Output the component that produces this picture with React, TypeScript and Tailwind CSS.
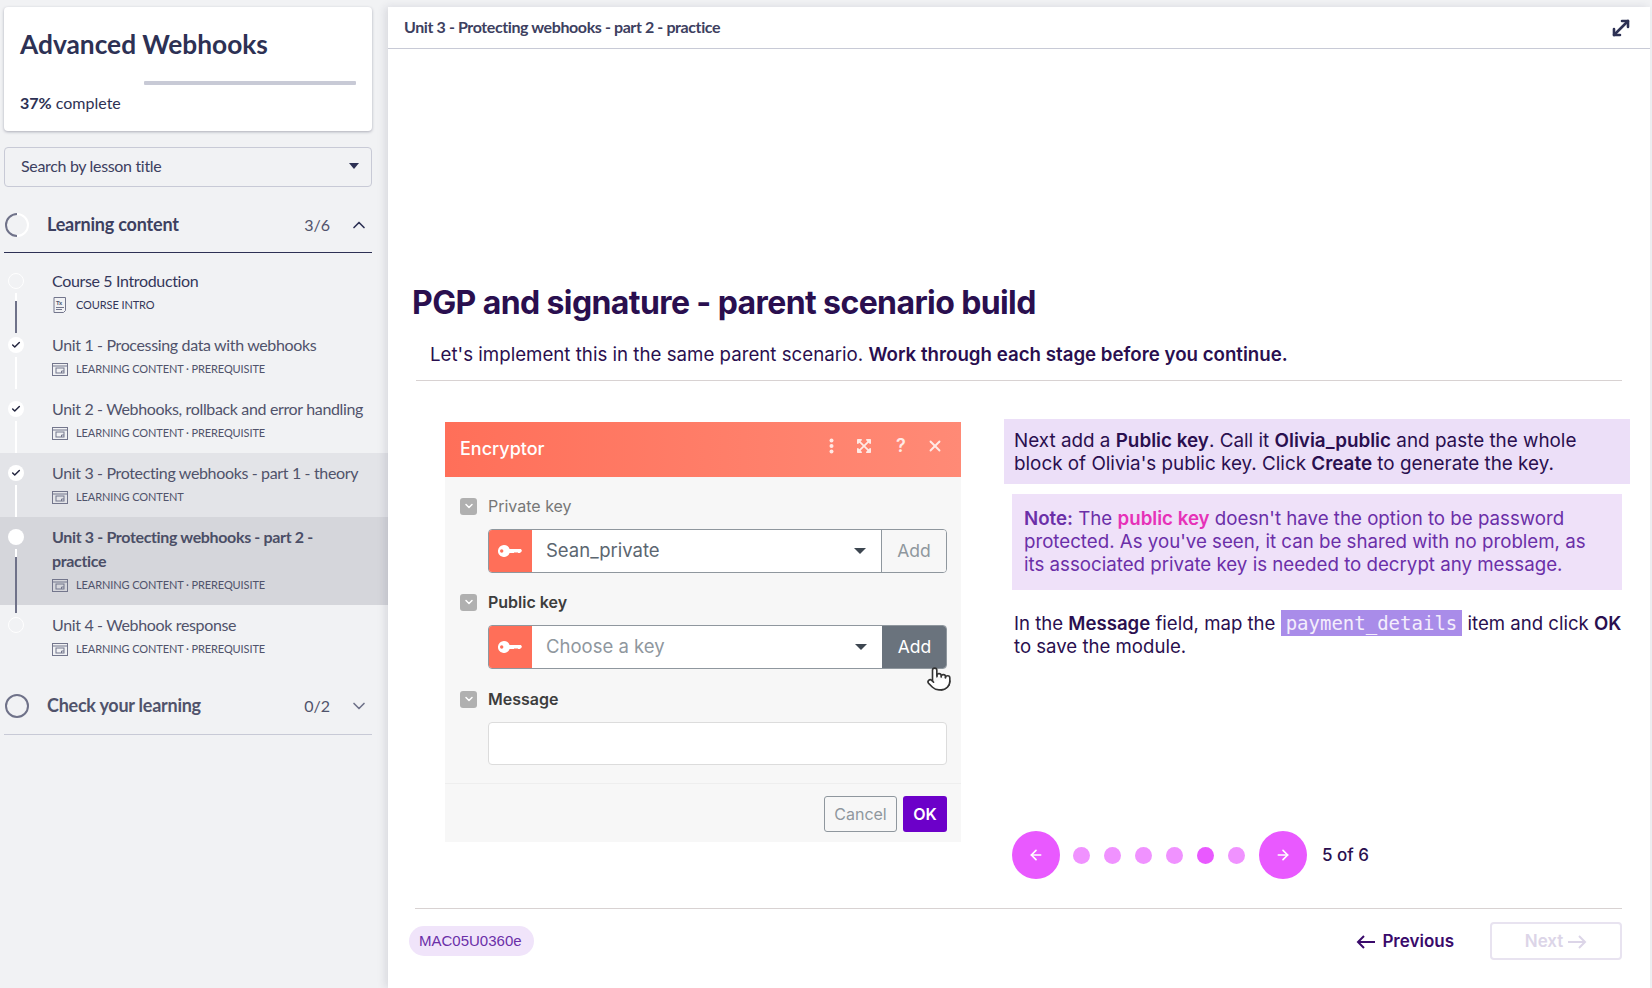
import { ChevronDown, ChevronUp, MoveDiagonal, Pointer, ArrowLeft, ArrowRight, Check, X } from 'lucide-react';
import { FaExpandArrowsAlt } from 'react-icons/fa';

const sideFont = 'font-["Lato","Noto_Sans",sans-serif]';
const mainFont = 'font-["Inter","Liberation_Sans",sans-serif]';

interface Lesson {
  title: string;
  meta: string;
  done?: boolean;
  bg?: string;
  bold?: boolean;
  intro?: boolean;
  dark?: string;
  dotFill?: boolean;
  last?: boolean;
}

const lessons: Lesson[] = [
  { title: 'Course 5 Introduction', meta: 'COURSE INTRO', intro: true, dark: 'h-[32px]' },
  { title: 'Unit 1 - Processing data with webhooks', meta: 'LEARNING CONTENT · PREREQUISITE', done: true },
  { title: 'Unit 2 - Webhooks, rollback and error handling', meta: 'LEARNING CONTENT · PREREQUISITE', done: true },
  { title: 'Unit 3 - Protecting webhooks - part 1 - theory', meta: 'LEARNING CONTENT', done: true, bg: 'bg-[#e3e4e8]' },
  {
    title: 'Unit 3 - Protecting webhooks - part 2 - practice',
    meta: 'LEARNING CONTENT · PREREQUISITE',
    bg: 'bg-[#d5d6db]',
    bold: true,
    dark: 'h-[56px]',
    dotFill: true,
  },
  { title: 'Unit 4 - Webhook response', meta: 'LEARNING CONTENT · PREREQUISITE', last: true },
];

function SlideIcon() {
  return (
    <svg width="16" height="13" viewBox="0 0 16 13" fill="none" stroke="#73768c" strokeWidth="1">
      <rect x="0.5" y="0.5" width="15" height="12" />
      <path d="M0.5 3h15" />
      <rect x="4" y="5" width="8" height="5" />
      <path d="M9.5 10V8H12" />
    </svg>
  );
}

function DocIcon() {
  return (
    <svg width="14" height="16" viewBox="0 0 14 16" fill="none" stroke="#73768c" strokeWidth="1">
      <path d="M1 .5h11.5v13l-2 2H1z" />
      <path d="M3 10.5h8M3 12.5h6" />
      <text x="3" y="8" fontSize="6" fill="#50536b" stroke="none" fontWeight="700">Tx</text>
    </svg>
  );
}

function LessonRow({ lesson }: { lesson: Lesson }) {
  return (
    <div className={`flex min-h-[64px] pl-2 pr-2 ${lesson.bg ?? ''}`}>
      <div className="flex w-4 shrink-0 flex-col items-center pt-3">
        <div
          className={`flex h-4 w-4 shrink-0 items-center justify-center rounded-full ${
            lesson.done || lesson.dotFill ? 'bg-white' : 'border border-white'
          }`}
        >
          {lesson.done && <Check className="h-2.5 w-2.5 text-[#23253f]" strokeWidth={3.5} />}
        </div>
        {!lesson.last && (
          <div className="mt-1 flex w-[2px] flex-1 flex-col justify-end bg-white">
            {lesson.dark && <div className={`w-[2px] bg-[#6f7289] ${lesson.dark} -mb-[8px]`} />}
          </div>
        )}
      </div>
      <div className="ml-7 flex-1 pt-2 pb-2">
        <div
          className={`text-[16px] leading-6 tracking-[-0.35px] ${
            lesson.bold ? 'max-w-[290px] font-bold text-[#4b4e66]' : lesson.intro ? 'text-[#34375a]' : 'text-[#50536b]'
          }`}
        >
          {lesson.title}
        </div>
        <div
          className={`flex h-6 items-center gap-2 text-[11px] tracking-[-0.1px] ${lesson.intro ? 'text-[#34375a]' : 'text-[#50536b]'}`}
        >
          <span className="flex w-4 justify-center">{lesson.intro ? <DocIcon /> : <SlideIcon />}</span>
          {lesson.meta}
        </div>
      </div>
    </div>
  );
}

function KeyIcon() {
  return (
    <svg width="24" height="12" viewBox="0 0 24 12" fill="#fff">
      <path
        fillRule="evenodd"
        d="M6 0a6 6 0 0 1 5.6 4H23l1 2-2 2h-2l-1-1-1 1-1-1-1 1h-4.400A6 6 0 1 1 6 0zM3.700 4.300a1.700 1.700 0 1 0 0 3.400 1.700 1.700 0 0 0 0-3.400z"
      />
    </svg>
  );
}

function LongArrow({ flip }: { flip?: boolean }) {
  return (
    <svg
      width="20"
      height="14"
      viewBox="0 0 20 14"
      fill="none"
      stroke="currentColor"
      strokeWidth="2"
      className={flip ? 'rotate-180' : ''}
    >
      <path d="M19 7H2M8 1 2 7l6 6" />
    </svg>
  );
}

function FieldLabel({ label, bold }: { label: string; bold?: boolean }) {
  return (
    <div className="flex h-6 items-center">
      <div className="flex h-[17px] w-[17px] items-center justify-center rounded-[3px] bg-[#b0b0b0]">
        <ChevronDown className="h-3 w-3 text-white" strokeWidth={3} />
      </div>
      <span className={`ml-[11px] text-[16px] ${bold ? 'font-semibold text-[#3d3d3d]' : 'text-[#777]'}`}>{label}</span>
    </div>
  );
}

function KeySelect({ value, muted, hover }: { value: string; muted?: boolean; hover?: boolean }) {
  return (
    <div className="ml-[28px] flex h-[44px] overflow-hidden rounded-[4px] border border-[#8f979e] bg-white">
      <div className="-my-px -ml-px flex w-[44px] items-center justify-center bg-[#ff6f59]">
        <KeyIcon />
      </div>
      <div className={`flex flex-1 items-center pl-[14px] text-[18.5px] ${muted ? 'text-[#8f979e]' : 'text-[#5b6670]'}`}>
        {value}
      </div>
      <div className="mr-[15px] flex items-center">
        <div className="h-0 w-0 border-x-[6px] border-t-[6px] border-x-transparent border-t-[#3d4650]" />
      </div>
      <div
        className={`flex w-[65px] items-center justify-center text-[17.5px] ${
          hover
            ? '-my-px -mr-px bg-[#6a737d] text-white'
            : 'border-l border-[#8f979e] bg-[#f7f7f7] text-[#8f979e]'
        }`}
      >
        Add
      </div>
    </div>
  );
}

function Encryptor() {
  return (
    <div className={`relative w-[516px] shrink-0 bg-[#f7f7f7] ${mainFont}`}>
      <div className="flex h-[55px] items-center bg-gradient-to-r from-[#ff6f59] to-[#ff8a76] pb-[3px] pl-[15px] pr-[17px] text-white">
        <span className="flex-1 text-[18px] font-medium">Encryptor</span>
        <div className="-mt-[4px] flex items-center text-[#ffe9e5]">
          <svg width="5" height="16" viewBox="0 0 5 16" fill="currentColor">
            <circle cx="2.500" cy="2.500" r="2" />
            <circle cx="2.500" cy="8" r="2" />
            <circle cx="2.500" cy="13.500" r="2" />
          </svg>
          <FaExpandArrowsAlt className="ml-[22px] h-4 w-4" />
          <span className="ml-[21px] w-4 text-center text-[18px] font-semibold leading-none">?</span>
          <X className="ml-[17px] h-[18px] w-[18px]" strokeWidth={2.5} />
        </div>
      </div>
      <div className="pl-[15px] pr-[14px] pt-[17px]">
        <FieldLabel label="Private key" />
        <div className="mt-[11px]">
          <KeySelect value="Sean_private" />
        </div>
        <div className="mt-[17px]">
          <FieldLabel label="Public key" bold />
        </div>
        <div className="mt-[11px]">
          <KeySelect value="Choose a key" muted hover />
        </div>
        <div className="mt-[18px]">
          <FieldLabel label="Message" bold />
        </div>
        <div className="ml-[28px] mt-[11px] h-[43px] rounded-[4px] border border-[#dcdcdc] bg-white" />
      </div>
      <div className="mt-[18px] flex h-[59px] items-start justify-end gap-[6px] border-t border-[#eeeeee] pr-[14px] pt-[12px]">
        <div className="flex h-[36px] w-[73px] items-center justify-center rounded-[3px] border border-[#8f979e] text-[16px] text-[#8f979e]">
          Cancel
        </div>
        <div className="flex h-[36px] w-[44px] items-center justify-center rounded-[3px] bg-[#6c00c9] text-[16px] font-semibold text-white">
          OK
        </div>
      </div>
      <Pointer className="absolute left-[481px] top-[243px] h-[28px] w-[26px] fill-white text-[#333]" strokeWidth={1.5} />
    </div>
  );
}

function Pager() {
  const dots = [false, false, false, false, true, false];
  return (
    <div className="ml-[8px] flex items-center">
      <div className="flex h-12 w-12 items-center justify-center rounded-full bg-[#e959ff]">
        <ArrowLeft className="h-4 w-4 text-white" strokeWidth={2.5} />
      </div>
      <div className="ml-[13px] flex gap-[14px]">
        {dots.map((active, i) => (
          <div key={i} className={`h-[17px] w-[17px] rounded-full ${active ? 'bg-[#e959ff]' : 'bg-[#f092ff]'}`} />
        ))}
      </div>
      <div className="ml-[14px] flex h-12 w-12 items-center justify-center rounded-full bg-[#e959ff]">
        <ArrowRight className="h-4 w-4 text-white" strokeWidth={2.5} />
      </div>
      <span className="ml-[15px] text-[17px] font-medium text-[#2a0f4f]">5 of 6</span>
    </div>
  );
}

export default function App() {
  return (
    <div className="flex h-[988px] w-[1652px] overflow-hidden bg-[#f1f2f4]">
      {/* Sidebar */}
      <aside className={`w-[388px] shrink-0 pt-[7px] ${sideFont}`}>
        <div className="mx-1 w-[368px]">
          <div className="h-[124px] rounded-[4px] bg-white px-4 pt-[19px] shadow-[0_1px_3px_rgba(40,42,70,0.35)]">
            <h1 className="text-[26.3px] font-bold leading-[36px] text-[#2d3154]">Advanced Webhooks</h1>
            <div className="mt-[19px] flex h-[4px]">
              <div className="w-[124px]" />
              <div className="flex-1 rounded-[1px] bg-[#c8cad6]" />
            </div>
            <div className="mt-[6px] text-[16px] leading-6 text-[#2d3154]">
              <span className="font-bold">37%</span> complete
            </div>
          </div>
          <div className="mt-4 flex h-[40px] items-center justify-between rounded-[4px] border border-[#c8cad6] pb-[2px] pl-[16px] pr-[12px] text-[16px] tracking-[-0.33px] text-[#3d4060]">
            Search by lesson title
            <div className="h-0 w-0 border-x-[5px] border-t-[6px] border-x-transparent border-t-[#2d3154]" />
          </div>
          <div className="mt-[18px] flex h-[48px] items-center border-b border-[#2d3154] pb-[8px] pl-px pr-[3px]">
            <svg width="24" height="24" viewBox="0 0 24 24" fill="none" strokeWidth="2">
              <circle cx="12" cy="12" r="11" stroke="#fff" />
              <path d="M12 1a11 11 0 0 0 0 22" stroke="#6f7289" />
            </svg>
            <span className="ml-[18px] flex-1 text-[18px] font-bold tracking-[-0.2px] text-[#3d4060]">Learning content</span>
            <span className="mr-[19px] text-[16px] text-[#50536b]">3/6</span>
            <ChevronUp className="h-5 w-5 text-[#2d3154]" strokeWidth={2} />
          </div>
        </div>
        <div className="mt-[8px]">
          {lessons.map((l) => (
            <LessonRow key={l.title} lesson={l} />
          ))}
        </div>
        <div className="mx-1 mt-[8px] flex h-[58px] w-[368px] items-center border-b border-[#c8cad6] pl-px pr-[3px]">
          <div className="h-6 w-6 rounded-full border-2 border-[#6f7289]" />
          <span className="ml-[18px] flex-1 text-[18px] font-bold tracking-[-0.25px] text-[#50536b]">Check your learning</span>
          <span className="mr-[19px] text-[16px] text-[#50536b]">0/2</span>
          <ChevronDown className="h-5 w-5 text-[#6f7289]" strokeWidth={2} />
        </div>
      </aside>

      {/* Main */}
      <main className="mr-[2px] mt-[7px] flex min-w-0 flex-1 flex-col bg-white shadow-[-3px_0_8px_rgba(40,42,70,0.12)]">
        <header className={`flex h-[42px] items-center justify-between border-b border-[#c8cad6] pl-[16px] pr-[17px] ${sideFont}`}>
          <span className="pb-[2px] text-[16px] font-bold tracking-[-0.4px] text-[#3d4060]">
            Unit 3 - Protecting webhooks - part 2 - practice
          </span>
          <MoveDiagonal className="h-6 w-6 text-[#2d3154]" strokeWidth={2.6} />
        </header>

        <div className={`flex-1 pl-[24px] pr-[28px] text-[#2a0f4f] ${mainFont}`}>
          <h2 className="mt-[232px] text-[32px] font-bold leading-[44px] tracking-[-0.6px] text-[#2a0f4f]">
            PGP and signature - parent scenario build
          </h2>
          <p className="ml-[18px] mt-[16px] text-[18.7px] leading-[28px]">
            Let's implement this in the same parent scenario.{' '}
            <span className="font-semibold">Work through each stage before you continue.</span>
          </p>
          <div className="ml-[4px] mt-[11px] h-px bg-[#d8d2d2]" />

          <div className="mt-[41px] flex items-start">
            <div className="ml-[33px]">
              <Encryptor />
            </div>
            <div className="ml-[43px] -mt-[3px] flex h-[460px] w-[626px] shrink-0 flex-col text-[18.85px] leading-[23px]">
              <div className="bg-[#ecdff8] px-[10px] pb-[9px] pt-[10px]">
                Next add a <b className="font-semibold">Public key</b>. Call it{' '}
                <b className="font-semibold">Olivia_public</b> and paste the whole block of Olivia's public key. Click{' '}
                <b className="font-semibold">Create</b> to generate the key.
              </div>
              <div className="mx-[8px] mt-[10px] bg-[#efe1f9] px-[12px] pb-[14px] pt-[13px] text-[18.7px] text-[#6b2fa8]">
                <b className="font-semibold">Note:</b> The <b className="font-semibold text-[#e631b8]">public key</b>{' '}
                doesn't have the option to be password protected. As you've seen, it can be shared with no problem, as
                its associated private key is needed to decrypt any message.
              </div>
              <div className="mt-[22px] pl-[10px] text-[18.6px]">
                In the <b className="font-semibold">Message</b> field, map the{' '}
                <code className="bg-[#a98ce9] px-[5px] py-[2px] font-['DejaVu_Sans_Mono',monospace] text-[19px] text-[#f4eefc]">
                  payment_details
                </code>{' '}
                item and click <b className="font-semibold">OK</b> to save the module.
              </div>
              <div className="mt-auto">
                <Pager />
              </div>
            </div>
          </div>

          <div className="ml-[3px] mt-[29px] h-px bg-[#d8d2d2]" />
          <div className="mt-[13px] flex items-center justify-between">
            <div className="-ml-[3px] flex h-[30px] items-center rounded-full bg-[#f0e4fa] pl-[10px] pr-[12px] font-['Liberation_Sans',sans-serif] text-[15px] text-[#6b2fa8]">
              MAC05U0360e
            </div>
            <div className="flex items-center">
              <div className="flex items-center gap-[6px] pt-[2px] text-[17px] font-semibold text-[#3a0a6b]">
                <LongArrow />
                Previous
              </div>
              <div className="ml-[36px] flex h-[38px] w-[132px] items-center justify-center gap-1 rounded-[4px] border-2 border-[#e8e3f0] pt-[2px] text-[17px] font-semibold text-[#dcd5e8]">
                Next
                <LongArrow flip />
              </div>
            </div>
          </div>
        </div>
      </main>
    </div>
  );
}
